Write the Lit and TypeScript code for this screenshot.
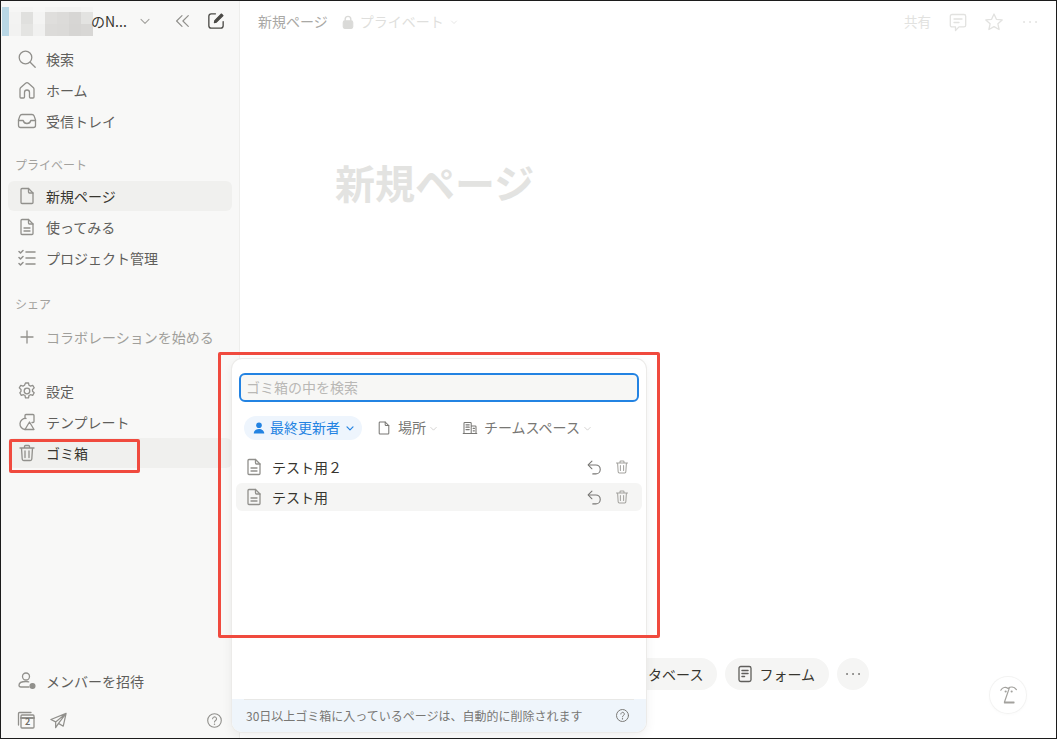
import { LitElement, html, css, svg } from "lit";
import { customElement } from "lit/decorators.js";

const ic = (size: number, body: unknown, cls = "") =>
  html`<svg class="ic ${cls}" width=${size} height=${size} viewBox="0 0 20 20" fill="none" stroke="currentColor" stroke-width="1.3" stroke-linecap="round" stroke-linejoin="round">${body}</svg>`;

const I = {
  search: svg`<circle cx="8.5" cy="8.500" r="6.300"/><path d="M13.200 13.200l5 5"/>`,
  home: svg`<path d="M3 17V9.200c0-.7.3-1.200.8-1.700l4.800-4.200c.8-.7 2-.7 2.800 0l4.800 4.200c.5.5.8 1 .8 1.700V17c0 .6-.4 1-1 1h-2.500c-.6 0-1-.4-1-1v-4.500a2.500 2.500 0 0 0-5 0V17c0 .6-.4 1-1 1H4c-.6 0-1-.4-1-1z"/>`,
  inbox: svg`<path d="M5 3.500h10c1 0 1.700.5 2.100 1.400L18.500 9v5.500c0 1.200-.8 2-2 2h-13c-1.200 0-2-.8-2-2V9l1.400-4.100C3.300 4 4 3.500 5 3.500z"/><path d="M1.500 9.500h4.700c.4 1.800 2 3 3.800 3s3.400-1.200 3.800-3h4.700"/>`,
  page: svg`<path d="M5 2.500h6.500L16 7v9.500c0 .6-.5 1-1 1H5c-.6 0-1-.4-1-1v-13c0-.6.4-1 1-1z"/><path d="M11.500 2.500V6c0 .6.400 1 1 1H16"/>`,
  doc: svg`<path d="M5 2.500h6.500L16 7v9.500c0 .6-.5 1-1 1H5c-.6 0-1-.4-1-1v-13c0-.6.4-1 1-1z"/><path d="M11.500 2.500V6c0 .6.400 1 1 1H16M7 11h6M7 14h6"/>`,
  tasks: svg`<path d="M2 3.500l1.500 1.500L6 2.500M2 9.500L3.500 11 6 8.500M2 15.500L3.500 17 6 14.500M9 4h9M9 10h9M9 16h9" stroke-width="1.500"/>`,
  plus: svg`<path d="M10 4v12M4 10h12"/>`,
  gear: svg`<circle cx="10" cy="10" r="2.800"/><path d="M8.500 2h3l.5 2.300 1.500.8 2.200-.8 1.500 2.600-1.700 1.600v1.800l1.700 1.500-1.500 2.600-2.200-.7-1.500.8-.5 2.300h-3l-.5-2.300-1.500-.8-2.200.7-1.500-2.600L4 10.300V8.500L2.300 6.900l1.500-2.600 2.200.8L7.500 4.300z"/>`,
  tpl: svg`<path d="M8 6V3.500c0-.6.400-1 1-1h7c.6 0 1 .4 1 1v6c0 .6-.4 1-1 1h-1"/><path d="M8 17.500a5.500 5.500 0 1 1 1-11"/><path d="M8 17.500l4.500-7.500 4.500 7.500z"/>`,
  trash: svg`<path d="M3 5h14M7.500 5V3.500c0-.6.400-1 1-1h3c.6 0 1 .4 1 1V5M4.500 5l.7 11c0 .9.700 1.500 1.500 1.500h6.600c.8 0 1.500-.6 1.500-1.500l.7-11M8 8v6.500M12 8v6.500"/>`,
  invite: svg`<circle cx="9" cy="5.500" r="3.500"/><path d="M12 16H4c-1.200 0-2-.8-2-1.700 0-2.300 3-3.800 7-3.800 1 0 1.900.1 2.700.3"/><circle cx="15.500" cy="15" r="2.400" fill="currentColor"/>`,
  cal: svg`<path d="M2.500 15V3.500c0-.6.400-1 1-1h11.500"/><rect x="5" y="5" width="13" height="13" rx="1"/><path d="M5 8h13" stroke-width="1.800"/>`,
  send: svg`<path d="M18 2.500L2 9l5 2.500L18 2.500zM18 2.500L15 16l-5-3-3 4.500v-6M10 13l8-10.500"/>`,
  help: svg`<circle cx="10" cy="10" r="8"/><path d="M7.800 8a2.300 2.300 0 1 1 3.500 2c-.8.500-1.300 1-1.300 1.800"/><path d="M10 14.300v.2" stroke-width="1.700"/>`,
  chev: svg`<path d="M5 8l5 5 5-5"/>`,
  dbl: svg`<path d="M10 4l-6 6 6 6M17 4l-6 6 6 6"/>`,
  edit: svg`<path d="M9.500 3.500H5.700C4.300 3.500 3.500 4.300 3.500 5.700v8.600c0 1.400.8 2.200 2.200 2.200h8.600c1.400 0 2.200-.8 2.200-2.200V10.500" stroke-width="1.200"/><path d="M8.500 11.500l.4-1.900 6-6 1.500 1.500-6 6z" fill="currentColor" stroke-width="1"/>`,
  lock: svg`<path d="M6.500 9V6.500a3.500 3.500 0 0 1 7 0V9" stroke-width="1.800"/><rect x="4" y="8.500" width="12" height="9.500" rx="2" fill="currentColor"/>`,
  comment: svg`<path d="M4 2.500h12c1 0 1.700.7 1.700 1.700v9c0 1-.7 1.700-1.700 1.700h-5L7.500 18.500v-3.600H4c-1 0-1.700-.7-1.700-1.700v-9c0-1 .7-1.700 1.700-1.700z"/><path d="M6 7h8M6 10.500h5"/>`,
  star: svg`<path d="M10 2l2.400 5.300 5.800.6-4.300 3.900 1.200 5.700-5.100-2.900-5.100 2.900 1.200-5.700L1.800 7.900l5.800-.6z"/>`,
  building: svg`<path d="M2.500 17V4c0-.6.400-1 1-1h7c.6 0 1 .4 1 1v13M11.500 7.500h5c.6 0 1 .4 1 1V17M1.500 17h17"/><path d="M5 6h4M5 9h4M5 12h4M14 10.500h1.500M14 13.500h1.500" stroke-width="1.500"/>`,
  person: svg`<circle cx="10" cy="6" r="4" fill="currentColor" stroke="none"/><path d="M2.500 18c0-4 3.300-6.500 7.500-6.500s7.500 2.500 7.500 6.500z" fill="currentColor" stroke="none"/>`,
  undo: svg`<path d="M7 2.500L2.500 7 7 11.500"/><path d="M3 7h8.500a5.200 5.200 0 0 1 0 10.500H8"/>`,
  form: svg`<rect x="4" y="2.500" width="12" height="15" rx="1.800"/><path d="M7 6.500h6M7 9.500h6M7 12.500h2.500" stroke-width="1.500"/>`,
  face: svg`<path d="M4 6c1.500-2.500 4-3 6-1.500C12 3 15 3 17 5.500M11 4.500L7 16h8M7 16.500h8" stroke-width="1"/><path d="M8 7h.1M13 7h.1" stroke-width="1.700"/>`,
};

const dots = svg`<path d="M4 10h.1M10 10h.1M16 10h.1" stroke-width="1.800"/>`;

const mosaic = [
  ["#f6f6f5", "#f5f5f4", "#f7f7f6", "#f4f4f3", "#f3f3f2", "#f3f3f2", "#f5f5f4"],
  ["#f3f3f2", "#e0e0de", "#f4f4f3", "#dfdedc", "#dcdbd9", "#d7d6d4", "#e3e3e1"],
  ["#f2f2f1", "#e4e4e2", "#f1f1f0", "#dcdbd9", "#dbdad8", "#d6d5d3", "#d8d7d5"],
];

type Row = [unknown, string, string?];
const nav = (rows: Row[]) =>
  rows.map(
    ([icon, label, cls]) =>
      html`<div class="row ${cls ?? ""}">${ic(20, icon)}<span>${label}</span></div>`
  );

@customElement("app-root")
class AppRoot extends LitElement {
  static styles = css`
    :host {
      display: block;
      position: relative;
      width: 1057px;
      height: 739px;
      box-sizing: border-box;
      border: 1px solid #1c1c1c;
      overflow: hidden;
      background: #fff;
      font-family: "Noto Sans CJK JP", "Noto Sans", sans-serif;
      font-size: 14px;
      color: #37352f;
    }
    .ic { display: block; flex: none; }
    .app { display: flex; height: 100%; }
    .side {
      width: 239px;
      flex: none;
      box-sizing: border-box;
      background: #f8f8f7;
      border-right: 1px solid #eeeeec;
      display: flex;
      flex-direction: column;
      padding: 5px 7px 3px 7px;
      color: #5f5e5b;
    }
    .head { display: flex; align-items: center; height: 30px; margin: 0 0 8px -6px; color: #37352f; }
    .mosaic { display: grid; grid-template-columns: 7px repeat(7, 12px); grid-template-rows: 5px 12px 12px; width: 89px; flex: none; }
    .blue { grid-row: 1 / 4; background: #b9d7e5; }
    .wsname { font-size: 14px; white-space: nowrap; width: 36px; color: #37352f; margin-right: 10px; }
    .chev-h { color: #a09f9b; }
    .dbl { color: #91908c; margin-left: 19.500px; }
    .edit { color: #4a4945; margin-left: 14.500px; }
    .group { display: flex; flex-direction: column; gap: 1px; }
    .row {
      display: flex;
      align-items: center;
      height: 30px;
      border-radius: 6px;
      padding-left: 9px;
      gap: 9px;
      white-space: nowrap;
      line-height: 1;
    }
    .row .ic { color: #91908c; }
    .row.on { background: #f0f0ee; color: #37352f; }
    .row.muted { color: #a09f9b; }
    .row.soft { background: #f0f0ee; color: #37352f; }
    .label { font-size: 12px; color: #a3a29e; height: 16px; line-height: 16px; padding-left: 7px; }
    .l1 { margin-top: 21px; margin-bottom: 8px; }
    .l2 { margin-top: 23px; margin-bottom: 10px; }
    .g3 { margin-top: 24px; }
    .spacer { flex: 1; }
    .foot { display: flex; align-items: center; height: 30px; margin-top: 9px; padding: 0 9px 0 8px; color: #91908c; gap: 13px; }
    .foot .right { margin-left: auto; }
    .calwrap { position: relative; width: 20px; height: 20px; flex: none; }
    .calnum { position: absolute; left: 9px; top: 6px; font-size: 9px; line-height: 12px; color: #6d6c68; font-weight: 700; }
    .main { flex: 1; min-width: 0; display: flex; flex-direction: column; position: relative; }
    .top { display: flex; align-items: center; height: 42px; padding: 0 16px 0 18px; flex: none; }
    .crumb { color: #a9a8a5; padding-bottom: 2px; }
    .priv { display: flex; align-items: center; gap: 4px; margin-left: 12px; color: #dfdfdd; }
    .priv span { padding-bottom: 2px; }
    .priv .ic { color: #dadad8; }
    .priv .ic:last-child { margin-left: 1px; }
    .tright { margin-left: auto; display: flex; align-items: center; color: #e2e2e0; }
    .tright span { margin-right: 17px; font-size: 13.500px; padding-bottom: 2px; }
    .tright .ic + .ic { margin-left: 16px; }
    .page { flex: 1; display: flex; flex-direction: column; padding: 0 0 48px 95px; }
    h1 { margin: 113px 0 0; font-size: 40px; line-height: 52px; font-weight: 700; color: #e3e3e1; }
    .pills { margin-top: auto; display: flex; justify-content: flex-end; gap: 8px; padding-right: 187px; }
    .pill { height: 32px; border-radius: 16px; background: #f5f5f4; display: flex; align-items: center; padding: 0 14px 0 10px; gap: 4px; color: #37352f; white-space: nowrap; }
    .pill .ic { color: #5f5e5b; }
    .pill.dots .ic { color: #787774; }
    .dots { width: 32px; padding: 0; justify-content: center; }
    .float {
      position: absolute;
      right: 30px;
      bottom: 25px;
      width: 36px;
      height: 36px;
      border-radius: 50%;
      background: #fff;
      box-shadow: 0 0 0 1px #f3f3f2, 0 1px 4px rgba(0,0,0,.03);
      display: flex;
      align-items: center;
      justify-content: center;
      color: #a3a29e;
    }
    .pop {
      position: absolute;
      left: 231px;
      top: 358px;
      width: 414px;
      height: 373px;
      box-sizing: border-box;
      background: #fff;
      border-radius: 10px;
      box-shadow: 0 0 0 1px #ecebe9, 0 4px 12px rgba(0,0,0,.07);
      display: flex;
      flex-direction: column;
      overflow: hidden;
    }
    .input {
      margin: 14px 7px 0;
      height: 29px;
      box-sizing: border-box;
      border: 2px solid #2383e2;
      border-radius: 6px;
      background: #f7f7f5;
      display: flex;
      align-items: center;
      padding: 0 0 2px 5px;
      color: #b9b8b5;
      flex: none;
    }
    .filters { display: flex; align-items: center; height: 24px; margin: 14px 0 0 12px; color: #787774; }
    .fp { display: flex; align-items: center; height: 24px; border-radius: 12px; white-space: nowrap; }
    .fp span { padding-bottom: 2px; }
    .fp.act { background: #eef5fd; color: #2383e2; padding: 0 5px 0 8px; gap: 4px; width: 118px; box-sizing: border-box; }
    .fp.pl { margin-left: 14px; gap: 6px; }
    .fp.pl .c { color: #c4c3c0; margin-left: -4px; }
    .fp.pl + .fp.pl { margin-left: 23px; }
    .list { margin: 13px 4px 0; display: flex; flex-direction: column; gap: 2px; }
    .it { display: flex; align-items: center; height: 28px; border-radius: 6px; padding: 0 12px 0 8px; gap: 8px; color: #37352f; }
    .it.hov { background: #f5f5f4; }
    .it .ic { color: #91908c; }
    .it .u { margin-left: auto; color: #787774; }
    .it .u + .ic { margin-left: 3px; color: #a3a29e; }
    .foot2 {
      margin-top: auto;
      height: 33px;
      background: #eff5fb;
      display: flex;
      align-items: center;
      padding: 0 16px 0 14px;
      font-size: 12px;
      color: #787774;
      position: relative;
    }
    .foot2::before { content: ""; position: absolute; left: 12px; right: 12px; top: 0; height: 1px; background: #e8e8e6; }
    .foot2 .ic { margin-left: auto; color: #787774; }
    .mark { position: absolute; border: 3px solid #f04a3e; border-radius: 2px; box-sizing: border-box; pointer-events: none; }
    .m1 { left: 8px; top: 438px; width: 131px; height: 34px; }
    .m2 { left: 217px; top: 351px; width: 442px; height: 286px; }
  `;

  render() {
    return html`
      <div class="app">
        <aside class="side">
          <div class="head">
            <div class="mosaic">
              <div class="blue"></div>
              ${mosaic.flat().map((c) => html`<div style="background:${c}"></div>`)}
            </div>
            <span class="wsname">のN...</span>
            ${ic(16, I.chev, "chev-h")}
            ${ic(18, I.dbl, "dbl")}
            ${ic(22, I.edit, "edit")}
          </div>
          <div class="group">
            ${nav([[I.search, "検索"], [I.home, "ホーム"], [I.inbox, "受信トレイ"]])}
          </div>
          <div class="label l1">プライベート</div>
          <div class="group">
            ${nav([[I.page, "新規ページ", "on"], [I.doc, "使ってみる"], [I.tasks, "プロジェクト管理"]])}
          </div>
          <div class="label l2">シェア</div>
          <div class="group">${nav([[I.plus, "コラボレーションを始める", "muted"]])}</div>
          <div class="group g3">
            ${nav([[I.gear, "設定"], [I.tpl, "テンプレート"], [I.trash, "ゴミ箱", "soft"]])}
          </div>
          <div class="spacer"></div>
          <div class="group">${nav([[I.invite, "メンバーを招待"]])}</div>
          <div class="foot">
            <div class="calwrap">${ic(20, I.cal)}<span class="calnum">2</span></div>
            ${ic(19, I.send)}
            ${ic(17, I.help, "right")}
          </div>
        </aside>
        <main class="main">
          <div class="top">
            <span class="crumb">新規ページ</span>
            <div class="priv">${ic(16, I.lock)}<span>プライベート</span>${ic(10, I.chev)}</div>
            <div class="tright">
              <span>共有</span>
              ${ic(20, I.comment)}
              ${ic(20, I.star)}
              ${ic(20, dots)}
            </div>
          </div>
          <div class="page">
            <h1>新規ページ</h1>
            <div class="pills">
              <div class="pill">データベース</div>
              <div class="pill">${ic(20, I.form)}<span>フォーム</span></div>
              <div class="pill dots">${ic(20, dots)}</div>
            </div>
          </div>
          <div class="float">${ic(24, I.face)}</div>
        </main>
      </div>
      <section class="pop">
        <div class="input">ゴミ箱の中を検索</div>
        <div class="filters">
          <div class="fp act">${ic(14, I.person)}<span>最終更新者</span>${ic(12, svg`<path d="M5 8l5 5 5-5" stroke-width="2"/>`)}</div>
          <div class="fp pl">${ic(16, I.page)}<span>場所</span>${ic(11, I.chev, "c")}</div>
          <div class="fp pl">${ic(16, I.building)}<span>チームスペース</span>${ic(11, I.chev, "c")}</div>
        </div>
        <div class="list">
          <div class="it">${ic(20, I.doc)}<span>テスト用２</span>${ic(17, I.undo, "u")}${ic(16, I.trash)}</div>
          <div class="it hov">${ic(20, I.doc)}<span>テスト用</span>${ic(17, I.undo, "u")}${ic(16, I.trash)}</div>
        </div>
        <div class="foot2"><span>30日以上ゴミ箱に入っているページは、自動的に削除されます</span>${ic(15, I.help)}</div>
      </section>
      <div class="mark m1"></div>
      <div class="mark m2"></div>
    `;
  }
}
